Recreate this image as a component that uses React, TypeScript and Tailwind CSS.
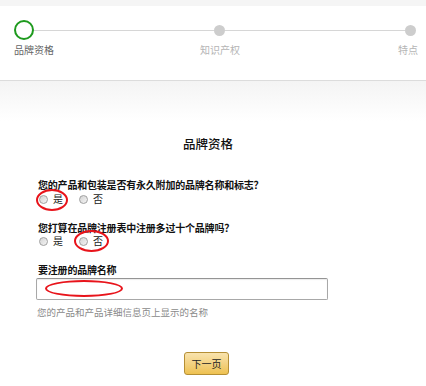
import React from "react";

function Radio({ label, circled, ellipse }: { label: string; circled?: boolean; ellipse?: string }) {
  return (
    <span className="relative inline-flex items-center">
      <span className="w-[9px] h-[9px] rounded-full border border-[#a0a0a0] bg-gradient-to-br from-[#d4d4d4] to-[#f4f4f4]" />
      <span className="ml-[5px] text-[10px] leading-[12px] text-[#222]">{label}</span>
      {circled && <span className={"absolute rounded-[50%] border-2 border-[#e8141b] pointer-events-none " + (ellipse || "")} />}
    </span>
  );
}

export default function App() {
  return (
    <div
      className="w-[426px] h-[386px] bg-white overflow-hidden"
      style={{ fontFamily: '"Noto Sans CJK SC", "Liberation Sans", sans-serif' }}
    >
      <div className="h-[6px] bg-[#f5f5f5]" />
      <div className="h-[75px] bg-white border-b border-[#dcdcdc] pl-[14px] pr-[10px] pt-[14px]">
        <div className="flex items-center">
          <div className="w-[20px] h-[20px] rounded-full border-2 border-[#1e9a1e]" />
          <div className="flex-1 h-px bg-[#d6d6d6]" />
          <div className="w-[11px] h-[11px] rounded-full bg-[#cdcdcd]" />
          <div className="flex-1 h-px bg-[#d6d6d6]" />
          <div className="w-[11px] h-[11px] rounded-full bg-[#cdcdcd]" />
        </div>
        <div className="grid grid-cols-3 mt-[3px] text-[10px] leading-[13px] -mr-[2px]">
          <span className="text-[#666]">品牌资格</span>
          <span className="text-center text-[#b5b5b5] pl-[8px]">知识产权</span>
          <span className="text-right text-[#b5b5b5]">特点</span>
        </div>
      </div>
      <div className="h-[40px] bg-gradient-to-b from-[#f4f4f4] to-white" />
      <div className="pl-[38px] pr-[98px]">
        <div className="mt-[14px] text-center text-[12.5px] leading-[18px] font-medium text-[#111] pl-[50px]">品牌资格</div>
        <div className="mt-[26px] text-[10px] leading-[12px] font-bold text-[#111] tracking-[-0.2px]">
          您的产品和包装是否有永久附加的品牌名称和标志？
        </div>
        <div className="mt-[2px] flex items-center gap-[16px] pl-[1px] h-[12px]">
          <Radio label="是" circled ellipse="-left-[3px] -top-[4px] w-[32px] h-[22px]" />
          <Radio label="否" />
        </div>
        <div className="mt-[17px] text-[10px] leading-[12px] font-bold text-[#111] tracking-[-0.2px]">
          您打算在品牌注册表中注册多过十个品牌吗？
        </div>
        <div className="mt-[1px] flex items-center gap-[16px] pl-[1px] h-[12px]">
          <Radio label="是" />
          <Radio label="否" circled ellipse="-left-[5px] -top-[5px] w-[35px] h-[22px]" />
        </div>
        <div className="mt-[17px] text-[10px] leading-[12px] font-bold text-[#111] tracking-[-0.2px]">要注册的品牌名称</div>
        <div className="relative -ml-[2px] mt-[2px] w-[292px] h-[22px] border border-[#a8a8a8] border-t-[#949494] rounded-[2px] bg-white shadow-[inset_0_1px_1px_rgba(0,0,0,0.08)]">
          <span className="absolute left-[8px] top-[1px] w-[78px] h-[17px] rounded-[50%] border-2 border-[#e8141b]" />
        </div>
        <div className="mt-[6px] text-[9.5px] leading-[12px] text-[#8a8a8a] -ml-[1px]">您的产品和产品详细信息页上显示的名称</div>
      </div>
      <div className="flex justify-center mt-[34px] pr-[13px]">
        <button className="w-[45px] h-[23px] rounded-[3px] border border-[#b58f35] bg-gradient-to-b from-[#f8e3ad] to-[#eec14f] text-[10px] text-[#222] leading-[21px]">
          下一页
        </button>
      </div>
    </div>
  );
}
